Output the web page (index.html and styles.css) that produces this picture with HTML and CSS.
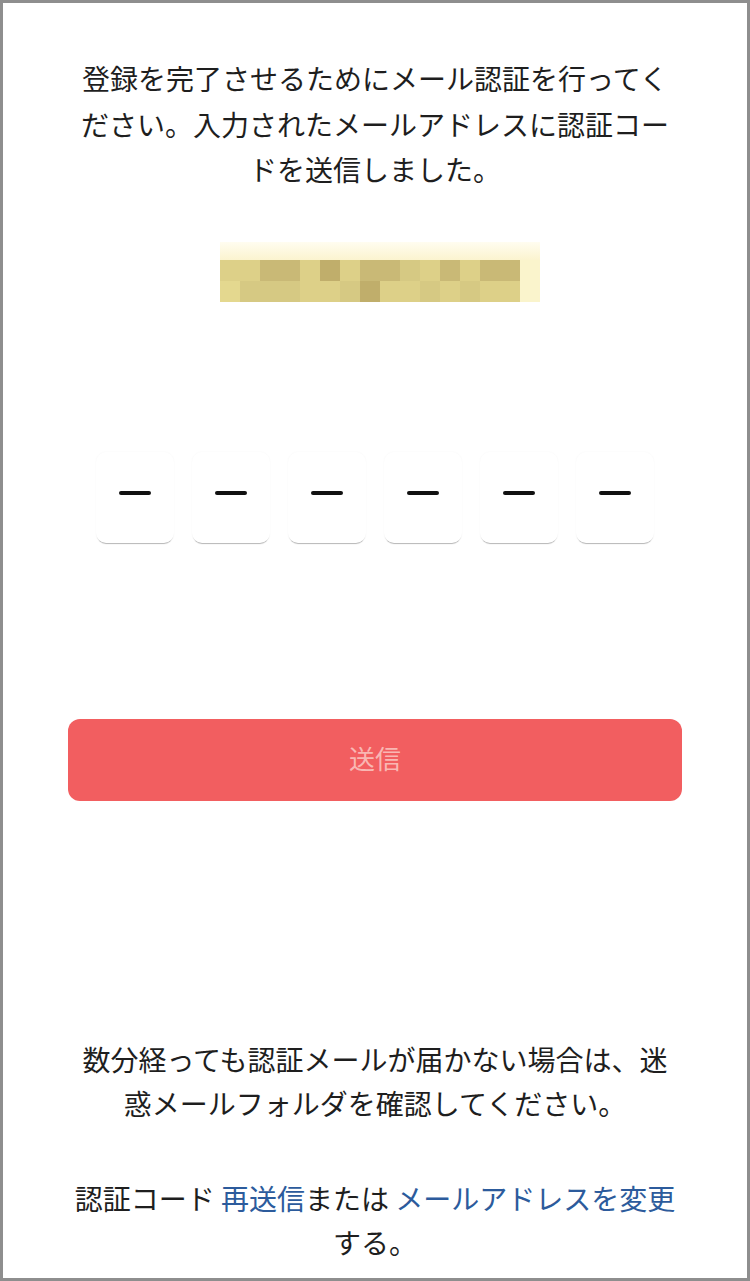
FILE: index.html
```html
<!DOCTYPE html>
<html lang="ja">
<head>
<meta charset="utf-8">
<title>メール認証</title>
<link rel="stylesheet" href="styles.css">
</head>
<body>
<div class="frame">
  <p class="intro">登録を完了させるためにメール認証を行ってください。入力されたメールアドレスに認証コードを送信しました。</p>

  <div class="mosaic" aria-label="メールアドレス">
    <div class="strip"></div>
    <div class="cells">
      <i class="t2"></i><i class="t2"></i><i class="t4"></i><i class="t4"></i><i class="t2"></i><i class="t5"></i><i class="t2"></i><i class="t4"></i><i class="t4"></i><i class="t3"></i><i class="t2"></i><i class="t4"></i><i class="t2"></i><i class="t4"></i><i class="t4"></i><i class="t0"></i>
      <i class="t1"></i><i class="t3"></i><i class="t3"></i><i class="t3"></i><i class="t2"></i><i class="t2"></i><i class="t3"></i><i class="t5"></i><i class="t2"></i><i class="t2"></i><i class="t3"></i><i class="t2"></i><i class="t3"></i><i class="t2"></i><i class="t2"></i><i class="t0"></i>
    </div>
  </div>

  <div class="code">
    <div class="box"><span class="dash"></span></div>
    <div class="box"><span class="dash"></span></div>
    <div class="box"><span class="dash"></span></div>
    <div class="box"><span class="dash"></span></div>
    <div class="box"><span class="dash"></span></div>
    <div class="box"><span class="dash"></span></div>
  </div>

  <button class="submit" type="button">送信</button>

  <p class="note">数分経っても認証メールが届かない場合は、迷惑メールフォルダを確認してください。</p>

  <p class="resend">認証コード <a href="#">再送信</a>または <a href="#">メールアドレスを変更</a>する。</p>
</div>
</body>
</html>
```

FILE: styles.css
```css
* { box-sizing: border-box; }

html, body {
  margin: 0;
  padding: 0;
  background: #ffffff;
}

body {
  font-family: "Noto Sans CJK JP", "Noto Sans", sans-serif;
  color: #1e1e1e;
}

.frame {
  width: 750px;
  height: 1281px;
  border: 3px solid #8e8e8e;
  padding: 53px 65px 0;
  display: flex;
  flex-direction: column;
  background: #ffffff;
}

.intro,
.note,
.resend {
  align-self: center;
  width: 600px;
  font-size: 28px;
  text-align: center;
}

.intro {
  margin: 0;
  line-height: 45.5px;
}

.mosaic {
  align-self: center;
  margin: 49px 0 0 10px;
  width: 320px;
  display: flex;
  flex-direction: column;
}

.strip {
  height: 18px;
  background: linear-gradient(#fffdf0, #fbf4cf);
}

.cells {
  display: grid;
  grid-template-columns: repeat(15, 20px) 20px;
  grid-auto-rows: 21px;
}

.cells i { display: block; }
.t0 { background: #faf4cc; }
.t1 { background: #e4d88f; }
.t2 { background: #ddd088; }
.t3 { background: #d6c983; }
.t4 { background: #c9b976; }
.t5 { background: #c0ae6b; }

.code {
  margin-top: 150px;
  display: flex;
  justify-content: center;
  gap: 18px;
}

.box {
  width: 78px;
  height: 91px;
  background: #ffffff;
  border-radius: 10px;
  box-shadow: 0 2px 1px -1px rgba(0, 0, 0, 0.28), 0 0 2px rgba(0, 0, 0, 0.04);
  display: flex;
  justify-content: center;
  align-items: center;
  padding-bottom: 8px;
}

.dash {
  display: block;
  width: 32px;
  height: 4px;
  border-radius: 2px;
  background: #111111;
}

.submit {
  margin-top: 176px;
  width: 614px;
  height: 82px;
  border: none;
  border-radius: 12px;
  background: #f25e60;
  color: #f9b7b3;
  font-family: "Noto Sans CJK JP", "Noto Sans", sans-serif;
  font-size: 26px;
  padding: 0 0 4px;
}

.note {
  margin: 236px 0 0;
  line-height: 44px;
}

.resend {
  width: 620px;
  margin: 51px 0 0;
  line-height: 44px;
}

.resend a {
  color: #2c5b9c;
  text-decoration: none;
}
```
